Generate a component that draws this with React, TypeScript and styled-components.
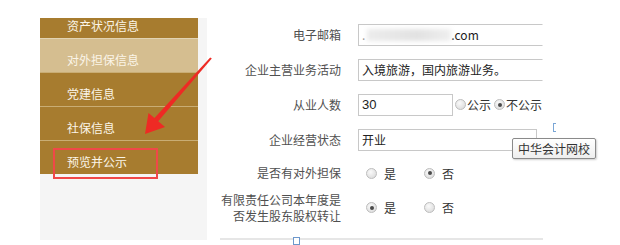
import React from 'react'
import styled, { createGlobalStyle } from 'styled-components'

const GlobalStyle = createGlobalStyle`
  html, body {
    margin: 0;
    padding: 0;
    background: #ffffff;
    font-family: "Noto Sans CJK SC", "Noto Sans", "Liberation Sans", sans-serif;
  }
`

const Page = styled.div`
  position: relative;
  display: flex;
  width: 620px;
  height: 245px;
  overflow: hidden;
  padding-left: 40px;
  box-sizing: border-box;
`

const SidePanel = styled.div`
  width: 167px;
  height: 222px;
  margin-top: 18px;
  background: #f5f5f5;
  overflow: hidden;
  flex-shrink: 0;
`

const Menu = styled.ul`
  width: 158px;
  margin: -14px 0 0;
  padding: 0;
  list-style: none;
`

const MenuItem = styled.li<{ $active?: boolean }>`
  display: flex;
  align-items: center;
  height: 34px;
  box-sizing: border-box;
  padding: 8px 0 0 27px;
  border-top: 1px solid ${({ $active }) => ($active ? '#e2d3b2' : '#c9ad74')};
  background: ${({ $active }) => ($active ? '#d5be90' : '#a77c2f')};
  color: #fbf5e8;
  font-size: 12px;
  &:first-child {
    border-top: none;
  }
`

const Form = styled.div`
  position: relative;
  flex: 1;
  padding-top: 17px;
`

const Row = styled.div<{ $h: number }>`
  display: grid;
  grid-template-columns: 134px 1fr;
  column-gap: 17px;
  align-items: center;
  height: ${({ $h }) => $h}px;
`

const Label = styled.div`
  text-align: right;
  color: #505050;
  font-size: 12px;
  line-height: 16px;
`

const Field = styled.div<{ $indent?: number }>`
  display: flex;
  align-items: center;
  padding-left: ${({ $indent }) => $indent ?? 0}px;
`

const Input = styled.div<{ $w: number; $open?: boolean }>`
  position: relative;
  display: flex;
  align-items: center;
  width: ${({ $w }) => $w}px;
  height: 22px;
  box-sizing: border-box;
  padding-left: 3px;
  border: 1px solid #c8c8c8;
  border-right-color: ${({ $open }) => ($open ? 'transparent' : '#c8c8c8')};
  color: #222;
  font-size: 12px;
  background: #fff;
`

const Blur = styled.span`
  display: inline-block;
  width: 84px;
  height: 12px;
  margin-left: 2px;
  background: linear-gradient(90deg, #ececec, #e2e2e2 60%, #efefef);
  filter: blur(2px);
`

const Num = styled.span`
  font-size: 13px;
  font-family: "Liberation Sans", "Noto Sans", sans-serif;
`

const Choice = styled.label`
  display: inline-flex;
  align-items: center;
  gap: 7px;
  color: #333;
  font-size: 12px;
  margin-right: 28px;
`

const Dot = styled.span<{ $on?: boolean }>`
  position: relative;
  display: inline-block;
  width: 9px;
  height: 9px;
  border-radius: 50%;
  border: 1px solid #bdbdbd;
  background: radial-gradient(circle at 40% 35%, #fafafa, #d6d6d6);
  &::after {
    content: '';
    display: ${({ $on }) => ($on ? 'block' : 'none')};
    position: absolute;
    left: 2.5px;
    top: 2.5px;
    width: 4px;
    height: 4px;
    border-radius: 50%;
    background: #4a4a4a;
  }
`

const Inline = styled.span`
  display: inline-flex;
  align-items: center;
  gap: 1px;
  margin-left: 2px;
  font-size: 12px;
  color: #333;
  & + & {
    margin-left: 3px;
  }
`

const Caret = styled.span`
  position: absolute;
  right: 6px;
  top: 8px;
  border-left: 4px solid transparent;
  border-right: 4px solid transparent;
  border-top: 5px solid #888;
`

const Tip = styled.div`
  position: absolute;
  left: 305px;
  top: 138px;
  padding: 0 5px;
  height: 21px;
  line-height: 20px;
  box-sizing: border-box;
  border: 1px solid #8a8a8a;
  border-radius: 2px;
  background: linear-gradient(#ffffff, #eeeeee);
  color: #333;
  font-size: 12px;
  box-shadow: 1px 1px 2px rgba(0, 0, 0, 0.2);
`

const Mark = styled.span`
  position: absolute;
  left: 346px;
  top: 123px;
  width: 2px;
  height: 7px;
  border: 1px solid #7aa6d6;
  border-right: none;
`

const BottomLine = styled.div`
  position: relative;
  margin: 12px 0 0 13px;
  width: 323px;
  height: 2px;
  background: #e6e6e6;
`

const BlueBox = styled.span`
  position: absolute;
  left: 73px;
  top: -1px;
  width: 5px;
  height: 6px;
  border: 1px solid #6d98cc;
  background: #fff;
`

const Highlight = styled.div`
  position: absolute;
  left: 53px;
  top: 148px;
  width: 105px;
  height: 31px;
  box-sizing: border-box;
  border: 2px solid #f04848;
`

const Arrow = styled.svg`
  position: absolute;
  left: 0;
  top: 0;
  pointer-events: none;
`

const menu = ['资产状况信息', '对外担保信息', '党建信息', '社保信息', '预览并公示']

export default function App() {
  return (
    <Page>
      <GlobalStyle />
      <SidePanel>
        <Menu>
          {menu.map((m, i) => (
            <MenuItem key={m} $active={i === 1}>
              {m}
            </MenuItem>
          ))}
        </Menu>
      </SidePanel>

      <Form>
        <Row $h={35}>
          <Label>电子邮箱</Label>
          <Field>
            <Input $w={185} $open>
              <span style={{ color: '#999' }}>.</span>
              <Blur />
              <span>.com</span>
            </Input>
          </Field>
        </Row>
        <Row $h={35}>
          <Label>企业主营业务活动</Label>
          <Field>
            <Input $w={185} $open>入境旅游，国内旅游业务。</Input>
          </Field>
        </Row>
        <Row $h={35}>
          <Label>从业人数</Label>
          <Field>
            <Input $w={95}>
              <Num>30</Num>
            </Input>
            <Inline>
              <Dot />
              公示
            </Inline>
            <Inline>
              <Dot $on />
              不公示
            </Inline>
          </Field>
        </Row>
        <Row $h={35}>
          <Label>企业经营状态</Label>
          <Field>
            <Input $w={179}>
              开业
              <Caret />
            </Input>
          </Field>
        </Row>
        <Row $h={32}>
          <Label>是否有对外担保</Label>
          <Field $indent={8}>
            <Choice>
              <Dot />是
            </Choice>
            <Choice>
              <Dot $on />否
            </Choice>
          </Field>
        </Row>
        <Row $h={37}>
          <Label>
            有限责任公司本年度是
            <br />
            否发生股东股权转让
          </Label>
          <Field $indent={8}>
            <Choice>
              <Dot $on />是
            </Choice>
            <Choice>
              <Dot />否
            </Choice>
          </Field>
        </Row>
        <BottomLine>
          <BlueBox />
        </BottomLine>
        <Mark />
        <Tip>中华会计网校</Tip>
      </Form>

      <Highlight />
      <Arrow width="620" height="245" viewBox="0 0 620 245">
        <polygon points="210.2,57.4 211.8,58.6 157.8,121.8 154,118.4" fill="#ee2a24" />
        <polygon points="145,134 148.5,113 165,127" fill="#ee2a24" />
      </Arrow>
    </Page>
  )
}
